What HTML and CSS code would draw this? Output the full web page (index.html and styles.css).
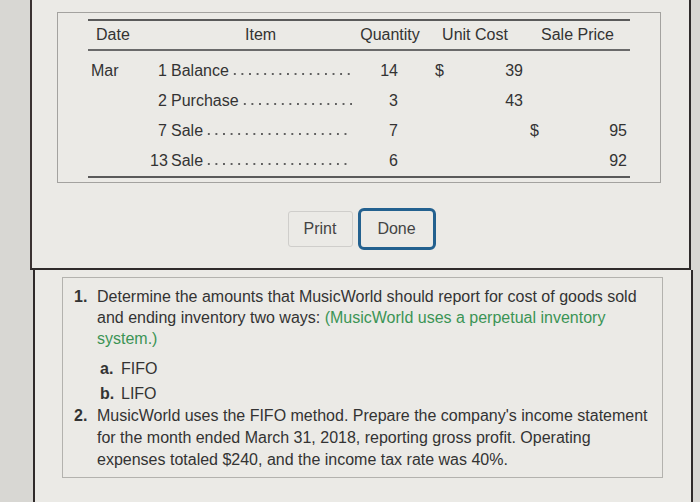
FILE: index.html
```html
<!DOCTYPE html>
<html>
<head>
<meta charset="utf-8">
<link rel="stylesheet" href="styles.css">
</head>
<body>
<div class="dialog">
  <div class="table-box">
    <div class="tbl">
      <div class="row head">
        <div class="h-date">Date</div>
        <div class="h-item">Item</div>
        <div class="h-center">Quantity</div>
        <div class="h-center">Unit Cost</div>
        <div class="h-center">Sale Price</div>
      </div>
      <div class="body">
        <div class="row">
          <div class="c-date">Mar</div>
          <div class="c-item"><span class="day">1</span><span class="name">Balance</span><span class="dots"></span></div>
          <div class="num">14</div>
          <div class="c-cost money"><span class="cur">$</span><span>39</span></div>
          <div class="c-sale money"></div>
        </div>
        <div class="row">
          <div class="c-date"></div>
          <div class="c-item"><span class="day">2</span><span class="name">Purchase</span><span class="dots"></span></div>
          <div class="num">3</div>
          <div class="c-cost money"><span class="cur"></span><span>43</span></div>
          <div class="c-sale money"></div>
        </div>
        <div class="row">
          <div class="c-date"></div>
          <div class="c-item"><span class="day">7</span><span class="name">Sale</span><span class="dots"></span></div>
          <div class="num">7</div>
          <div class="c-cost money"></div>
          <div class="c-sale money"><span class="cur">$</span><span>95</span></div>
        </div>
        <div class="row">
          <div class="c-date"></div>
          <div class="c-item"><span class="day">13</span><span class="name">Sale</span><span class="dots"></span></div>
          <div class="num">6</div>
          <div class="c-cost money"></div>
          <div class="c-sale money"><span class="cur"></span><span>92</span></div>
        </div>
      </div>
    </div>
  </div>
  <div class="buttons">
    <button class="btn print">Print</button>
    <button class="btn done">Done</button>
  </div>
</div>
<div class="lower">
  <div class="q-box">
    <div class="q">
      <span class="qn">1.</span>
      <div class="qt">Determine the amounts that MusicWorld should report for cost of goods sold and ending inventory two ways: <span class="green">(MusicWorld uses a perpetual inventory system.)</span></div>
    </div>
    <div class="sub">
      <div class="s"><span class="sn">a.</span><span>FIFO</span></div>
      <div class="s"><span class="sn">b.</span><span>LIFO</span></div>
    </div>
    <div class="q q2">
      <span class="qn">2.</span>
      <div class="qt">MusicWorld uses the FIFO method. Prepare the company's income statement for the month ended March 31, 2018, reporting gross profit. Operating expenses totaled $240, and the income tax rate was 40%.</div>
    </div>
  </div>
</div>
</body>
</html>
```
FILE: styles.css
```css
* { box-sizing: border-box; }
html, body { margin: 0; padding: 0; }
body {
  width: 700px;
  height: 502px;
  overflow: hidden;
  background: #d8d7d3;
  font-family: "Liberation Sans", Arial, sans-serif;
  color: #333;
}
.dialog {
  margin-left: 30px;
  width: 661px;
  height: 270px;
  background: #ebeae6;
  border-left: 2px solid #3a3232;
  border-right: 2px solid #2f2b2b;
  border-bottom: 2px solid #2f2b2b;
  padding-top: 12px;
}
.table-box {
  margin-left: 25px;
  width: 604px;
  height: 171px;
  border: 1px solid #a3a29f;
  padding-top: 6px;
  padding-left: 30px;
}
.tbl {
  width: 542px;
  border-top: 2px solid #5a5a5a;
  border-bottom: 2px solid #5a5a5a;
  font-size: 16px;
}
.row {
  display: grid;
  grid-template-columns: 62px 205px 70px 100px 105px;
  align-items: center;
  height: 30px;
}
.row.head {
  height: 30px;
  border-bottom: 2px solid #6a6a6a;
}
.body { padding-top: 5px; }
.h-date { padding-left: 8px; }
.h-item { padding-left: 95px; }
.h-center { text-align: center; }
.c-date { padding-left: 3px; }
.c-item { display: flex; align-items: baseline; }
.day { width: 17px; text-align: right; flex: none; }
.name { margin-left: 4px; flex: none; }
.dots {
  flex: 1;
  height: 4px;
  margin-right: 3px;
  margin-left: 2px;
  background-image: radial-gradient(circle, #5f5f5f 1px, transparent 1.3px);
  background-size: 7.6px 4px;
  background-repeat: repeat-x;
}
.num { text-align: right; padding-right: 27px; }
.money { display: flex; justify-content: space-between; }
.c-cost { padding-left: 10px; padding-right: 2px; }
.c-sale { padding-left: 5px; padding-right: 3px; }
.buttons {
  display: flex;
  justify-content: center;
  align-items: center;
  gap: 5px;
  margin-top: 25px;
  padding-left: 2px;
}
.btn {
  font-family: "Liberation Sans", Arial, sans-serif;
  font-size: 16px;
  color: #444;
  background: #ebeae6;
  padding: 0;
}
.print {
  width: 65px;
  height: 36px;
  border: 1px solid #cfcecb;
  border-radius: 3px;
}
.done {
  width: 78px;
  height: 42px;
  border: 3px solid #23618f;
  border-radius: 6px;
}
.lower {
  margin-left: 33px;
  width: 660px;
  height: 232px;
  background: #ebeae6;
  border-left: 2px solid #2f2a2a;
  border-right: 2px solid #2f2a2a;
  padding-top: 7px;
}
.q-box {
  margin-left: 27px;
  width: 601px;
  height: 201px;
  border: 1px solid #b3b2ae;
  padding: 8px 0 0 11px;
  font-size: 16px;
  line-height: 21px;
}
.q {
  display: grid;
  grid-template-columns: 23px 1fr;
}
.q2 { line-height: 22px; margin-top: 1px; }
.qn { font-weight: bold; }
.qt { width: 555px; }
.green { color: #3b9455; }
.sub {
  padding-left: 26px;
  margin-top: 9px;
}
.s { height: 21px; line-height: 21px; }
.s + .s { margin-top: 4px; }
.sn { font-weight: bold; display: inline-block; width: 21px; }
```
